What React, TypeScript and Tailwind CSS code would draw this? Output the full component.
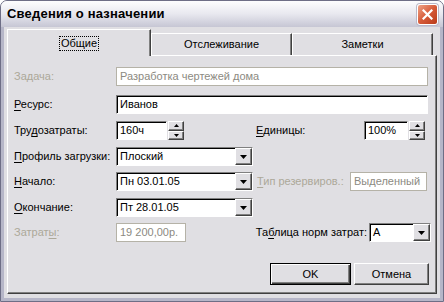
import React from 'react';

const sunken =
  'border border-t-[#808080] border-l-[#808080] border-b-white border-r-white shadow-[inset_1px_1px_0_#000]';
const raised =
  'border border-t-white border-l-white border-b-[#404040] border-r-[#404040] shadow-[inset_-1px_-1px_0_#808080] bg-[#e0dfe3]';

const Label = ({ text, u, disabled }: { text: string; u?: number; disabled?: boolean }) => (
  <span className={`whitespace-nowrap ${disabled ? 'text-[#aca899]' : 'text-black'}`}>
    {u === undefined ? (
      text
    ) : (
      <>
        {text.slice(0, u)}
        <span className="underline underline-offset-2">{text[u]}</span>
        {text.slice(u + 1)}
      </>
    )}
  </span>
);

const Arrow = ({ up, small }: { up?: boolean; small?: boolean }) => (
  <svg width={small ? 5 : 7} height={small ? 3 : 4} viewBox={small ? '0 0 5 3' : '0 0 7 4'}>
    {small ? (
      <polygon points={up ? '2.5,0 5,3 0,3' : '0,0 5,0 2.5,3'} fill="#000" />
    ) : (
      <polygon points="0,0 7,0 3.5,4" fill="#000" />
    )}
  </svg>
);

const TextBox = ({ value, w, disabled }: { value: string; w: string; disabled?: boolean }) => (
  <div
    className={`flex h-[19px] shrink-0 items-center whitespace-nowrap bg-white px-[3px] ${w} ${
      disabled ? 'border border-[#b5b2a7] text-[#8c8a82]' : `${sunken} text-black`
    }`}
  >
    {value}
  </div>
);

const Spin = ({ value, w }: { value: string; w: string }) => (
  <div className="flex h-[19px] shrink-0 items-center gap-[1px]">
    <div className={`flex h-full items-center bg-white px-[3px] ${w} ${sunken}`}>{value}</div>
    <div className="flex h-full w-[16px] flex-col">
      <div className={`flex flex-1 items-center justify-center ${raised}`}>
        <Arrow up small />
      </div>
      <div className={`flex flex-1 items-center justify-center ${raised}`}>
        <Arrow small />
      </div>
    </div>
  </div>
);

const Select = ({ value, w }: { value: string; w: string }) => (
  <div className={`flex h-[19px] shrink-0 items-center bg-white ${w} ${sunken}`}>
    <span className="flex-1 whitespace-nowrap pl-[3px]">{value}</span>
    <div className={`flex h-[17px] w-[17px] items-center justify-center ${raised}`}>
      <Arrow />
    </div>
  </div>
);

const Tab = ({ text, active }: { text: string; active?: boolean }) => (
  <div
    className={`flex items-center justify-center border-l border-t border-l-white border-t-white border-r border-r-[#404040] shadow-[inset_-1px_0_0_#808080] bg-[#e0dfe3] ${
      active ? 'relative z-10 -mb-px h-[27px] w-[144px]' : 'h-[22px] w-[141px]'
    }`}
  >
    {active ? (
      <span className="border border-dotted border-black px-[1px] leading-[13px]">{text}</span>
    ) : (
      text
    )}
  </div>
);

export default function App() {
  return (
    <div
      className="flex h-[302px] w-[444px] flex-col overflow-hidden rounded-t-[7px] border border-[#6e6e86] bg-[#e0dfe3] text-[11px] text-black"
      style={{ fontFamily: '"Liberation Sans", Arial, sans-serif' }}
    >
      {/* title bar */}
      <div className="flex h-[26px] items-center justify-between bg-gradient-to-b from-[#fdfdfe] via-[#e8e8ef] to-[#c6c6d4] pl-[6px] pr-[5px]">
        <span className="text-[13px] font-bold tracking-[0.2px] text-black">Сведения о назначении</span>
        <div className="flex h-[21px] w-[21px] items-center justify-center rounded-[3px] border border-white bg-gradient-to-br from-[#eea286] via-[#d65a38] to-[#b93a18] shadow-[0_0_0_1px_#b8b8c8]">
          <svg width="11" height="11" viewBox="0 0 11 11">
            <path d="M1.5 1.5 L9.5 9.5 M9.5 1.5 L1.5 9.5" stroke="#fff" strokeWidth="2.2" strokeLinecap="square" />
          </svg>
        </div>
      </div>

      {/* body */}
      <div className="flex flex-1 flex-col border-x-[3px] border-b-[3px] border-x-[#b6b6c8] border-b-[#b6b6c8] px-[3px] pb-[4px] pt-[2px]">
        <div className="flex items-end">
          <Tab text="Общие" active />
          <Tab text="Отслеживание" />
          <Tab text="Заметки" />
        </div>
        <div className="flex flex-1 flex-col border border-l-white border-t-white border-r-[#404040] border-b-[#404040] pb-[8px] pl-[6px] pr-[5px] pt-[11px] shadow-[inset_-1px_-1px_0_#808080]">
          <div className="flex items-center">
            <div className="w-[102px]">
              <Label text="Задача:" disabled />
            </div>
            <TextBox value="Разработка чертежей дома" w="w-[312px]" disabled />
          </div>
          <div className="mt-[9px] flex items-center">
            <div className="w-[102px]">
              <Label text="Ресурс:" u={0} />
            </div>
            <TextBox value="Иванов" w="w-[312px]" />
          </div>
          <div className="mt-[7px] flex items-center">
            <div className="w-[102px]">
              <Label text="Трудозатраты:" u={3} />
            </div>
            <Spin value="160ч" w="w-[51px]" />
            <div className="ml-[72px] w-[108px]">
              <Label text="Единицы:" u={0} />
            </div>
            <Spin value="100%" w="w-[44px]" />
          </div>
          <div className="mt-[7px] flex items-center">
            <div className="w-[102px]">
              <Label text="Профиль загрузки:" u={0} />
            </div>
            <Select value="Плоский" w="w-[137px]" />
          </div>
          <div className="mt-[6px] flex items-center">
            <div className="w-[102px]">
              <Label text="Начало:" u={0} />
            </div>
            <Select value="Пн 03.01.05" w="w-[137px]" />
            <div className="ml-[4px] w-[93px]">
              <Label text="Тип резервиров.:" u={0} disabled />
            </div>
            <TextBox value="Выделенный" w="w-[77px]" disabled />
          </div>
          <div className="mt-[7px] flex items-center">
            <div className="w-[102px]">
              <Label text="Окончание:" u={0} />
            </div>
            <Select value="Пт 28.01.05" w="w-[137px]" />
          </div>
          <div className="mt-[6px] flex items-center">
            <div className="w-[102px]">
              <Label text="Затраты:" u={6} disabled />
            </div>
            <TextBox value="19 200,00р." w="w-[70px]" disabled />
            <div className="flex flex-1 justify-end pr-[2px]">
              <Label text="Таблица норм затрат:" u={2} />
            </div>
            <Select value="А" w="w-[62px]" />
          </div>
          <div className="mt-auto flex justify-end gap-[3px] pr-[2px]">
            <button className="flex h-[22px] w-[81px] items-center justify-center border border-black bg-[#e0dfe3] shadow-[inset_1px_1px_0_#fff,inset_-1px_-1px_0_#404040,inset_-2px_-2px_0_#808080]">
              OK
            </button>
            <button className={`flex h-[22px] w-[75px] items-center justify-center ${raised}`}>Отмена</button>
          </div>
        </div>
      </div>
    </div>
  );
}
